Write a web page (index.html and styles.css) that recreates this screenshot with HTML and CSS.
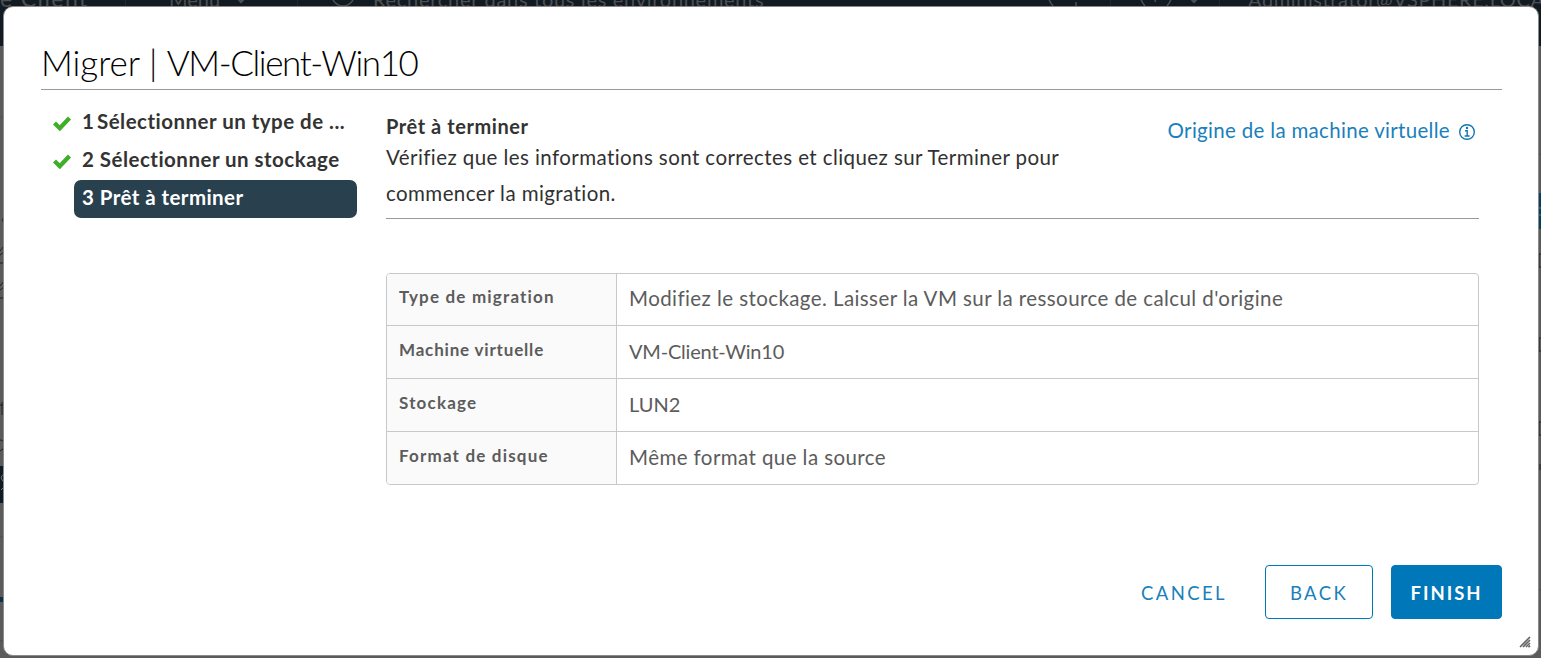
FILE: index.html
```html
<!DOCTYPE html>
<html lang="fr">
<head>
<meta charset="utf-8">
<title>Migrer | VM-Client-Win10</title>
<link rel="stylesheet" href="styles.css">
</head>
<body>
<div class="app">
  <header class="topbar">
    <div class="brand">e Client</div>
    <div class="menu"><span class="menu-label">Menu</span>
      <svg class="chevron" viewBox="0 0 16 10"><path d="M2 2l6 6 6-6"/></svg>
    </div>
    <div class="search">
      <svg class="ring" viewBox="0 0 24 24"><circle cx="12" cy="12" r="11"/></svg>
      <span class="search-label">Rechercher dans tous les environnements</span>
    </div>
    <div class="refresh"><svg class="ring wide" viewBox="0 0 34 24"><path d="M5 1c-5 7-5 15 1 22M29 19v4"/></svg></div>
    <div class="help">
      <svg class="ring wide" viewBox="0 0 34 24"><path d="M5 1c-5 7-5 15 1 22M29 1c5 7 5 15-1 22M18 8l-2 11"/></svg>
      <svg class="chevron" viewBox="0 0 16 10"><path d="M2 2l6 6 6-6"/></svg>
    </div>
    <div class="user">Administrator@VSPHERE.LOCAL</div>
  </header>
  <div class="workspace">
    <svg class="edge" viewBox="0 0 4 612">
      <path class="faint" d="M0 71h4M0 491h4M0 595h4"/>
      <path class="mark" d="M4 170q-3 4 0 8M0 205l4-5M0 209l4-3M0 217h4M0 240l4-5M0 244l4-3M0 252h4M0 359h4M2 356v13M0 394q4 0 4 5t-4 6"/>
      <rect class="dark" y="420" width="4" height="37"/>
      <path class="pale" d="M4 428q-5 3-1 7t-2 9"/>
      <rect class="teal" y="551" width="4" height="5"/>
    </svg>
    <svg class="edge" viewBox="0 0 4 612">
      <path class="faint" d="M0 108h4M0 544h4"/>
      <rect class="blue" y="147" width="4" height="36"/>
      <path class="pale" d="M4 162h-3v7h3"/>
      <path class="mark" d="M4 208H2v13h2M4 292H2v13h2M4 376H2v13h2M3 418v6"/>
    </svg>
  </div>
</div>

<section class="dialog" role="dialog">
  <h1 class="dialog-title">Migrer | <span class="vm-name">VM-Client-Win10</span></h1>
  <div class="dialog-body">
    <ol class="steps">
      <li class="step"><svg class="check" viewBox="0 0 20 16"><path d="M2.5 8l5.3 5.2L17.5 3"/></svg><span class="step-label"><span class="narrow">1</span> Sélectionner un type de ...</span></li>
      <li class="step"><svg class="check" viewBox="0 0 20 16"><path d="M2.5 8l5.3 5.2L17.5 3"/></svg><span class="step-label">2 Sélectionner un stockage</span></li>
      <li class="step"><span class="step-label active">3 Prêt à terminer</span></li>
    </ol>
    <main class="content">
      <div class="page-head">
        <div class="intro">
          <h2 class="page-title">Prêt à terminer</h2>
          <p class="page-text">Vérifiez que les informations sont correctes et cliquez sur Terminer pour<br>commencer la migration.</p>
        </div>
        <a class="origin"><span class="origin-label">Origine de la machine virtuelle</span>
          <svg class="info" viewBox="0 0 18 18"><circle cx="9" cy="9" r="7.3"/><path d="M7 7.8h2.2v5M6.6 13h5"/><circle class="dot" cx="9" cy="5" r="1.2"/></svg>
        </a>
      </div>
      <dl class="summary">
        <dt>Type de migration</dt><dd>Modifiez le stockage. Laisser la VM sur la ressource de calcul d'origine</dd>
        <dt class="snug">Machine virtuelle</dt><dd class="tight">VM-Client-Win10</dd>
        <dt>Stockage</dt><dd class="plain">LUN2</dd>
        <dt>Format de disque</dt><dd>Même format que la source</dd>
      </dl>
    </main>
  </div>
  <footer class="actions">
    <button class="btn link">CANCEL</button>
    <button class="btn outline">BACK</button>
    <button class="btn primary">FINISH</button>
  </footer>
  <svg class="grip" viewBox="0 0 12 12"><path d="M1 11L11 1M4 11l7-7M7 11l4-4M9.5 11.2l1.6-1.6"/></svg>
</section>
</body>
</html>
```
FILE: styles.css
```css
* { box-sizing: border-box; }
body {
  margin: 0;
  height: 658px;
  overflow: hidden;
  font-family: Lato, "Open Sans", sans-serif;
  font-size: 20px;
  color: #313131;
  background: #5b5b5b;
}
h1, h2, p, ol, dl, dd, dt { margin: 0; padding: 0; font-weight: 400; }
svg { display: block; fill: none; flex: none; }

.app { height: 658px; overflow: hidden; }
.topbar {
  display: grid;
  grid-template-columns: 126px 172px 740px 73px 109px 1fr;
  height: 94px;
  margin-top: -48px;
  background: #131b22;
  color: #4c5052;
  white-space: nowrap;
}
.topbar > div {
  display: flex;
  align-items: center;
  height: 94px;
  min-width: 0;
  border-right: 1px solid #20272d;
}
.topbar > .search, .topbar > .user { border-right: 0; }
.topbar > .refresh { padding-left: 9px; }
.brand { font-size: 23px; letter-spacing: 1.4px; padding-bottom: 2px; }
.menu { padding-left: 43px; gap: 13px; }
.search { padding-left: 33px; gap: 18px; }
.search-label { letter-spacing: .7px; }
.help { padding-left: 28px; gap: 13px; }
.user { padding-left: 28px; overflow: hidden; letter-spacing: .6px; }
.chevron { width: 16px; height: 10px; stroke: #4c5052; stroke-width: 2; }
.ring { width: 24px; height: 24px; stroke: #4c5052; stroke-width: 1.5; margin-top: -8px; }
.ring.wide { width: 34px; }

.workspace { display: flex; justify-content: space-between; height: 612px; background: #5b5b5b; }
.edge { width: 4px; height: 612px; }
.faint { stroke: #4e4e4e; }
.mark { stroke: #202020; }
.pale { stroke: #69757c; }
.dark { fill: #101a22; }
.teal { fill: #0b3346; }
.blue { fill: #083e5f; }

.dialog {
  position: absolute;
  left: 3px;
  top: 6px;
  width: 1536px;
  height: 650px;
  padding: 24px 36px 36px 37px;
  display: flex;
  flex-direction: column;
  background: #fff;
  border: 1px solid #8a8a8a;
  border-radius: 10px;
}
.dialog-title {
  height: 59px;
  border-bottom: 1px solid #999;
  font-size: 35px;
  font-weight: 300;
  line-height: 62px;
  color: #000;
}
.vm-name { letter-spacing: -1.4px; }
.dialog-body { display: flex; flex: 1; }

.steps { list-style: none; width: 345px; padding-top: 14px; }
.step { display: flex; height: 38px; padding-left: 11px; }
.step:last-child { padding-left: 33px; }
.check { width: 20px; height: 16px; margin: 11px 10px 0 0; stroke: #3fae29; stroke-width: 4.3; }
.step-label {
  font-size: 20.5px;
  line-height: 35px;
  font-weight: 700;
  letter-spacing: .48px;
  color: #333;
  white-space: nowrap;
}
.narrow { letter-spacing: -2.4px; }
.step-label.active {
  width: 283px;
  height: 38px;
  padding-left: 8px;
  line-height: 34px;
  letter-spacing: .43px;
  border-radius: 7px;
  background: #29404e;
  color: #fff;
}

.content { width: 1093px; }
.page-head {
  display: flex;
  justify-content: space-between;
  height: 129px;
  border-bottom: 1px solid #999;
  white-space: nowrap;
}
.page-title { margin-top: 21px; font-size: 20px; font-weight: 700; line-height: 30px; letter-spacing: .57px; color: #333; }
.page-text { font-size: 20.5px; line-height: 36px; margin-top: -2px; letter-spacing: .42px; }
.origin { display: flex; gap: 8px; height: 30px; margin: 25px 3px 0 0; line-height: 30px; color: #1a7fba; }
.origin-label { font-size: 20.5px; letter-spacing: .31px; }
.info { width: 18px; height: 18px; margin-top: 8px; stroke: #1377b0; stroke-width: 1.4; }
.dot { fill: #1377b0; stroke: none; }

.summary {
  display: grid;
  grid-template-columns: 230px 1fr;
  grid-template-rows: 52px 53px 53px 52px;
  height: 212px;
  margin-top: 54px;
  border: 1px solid #c8c8c8;
  border-radius: 4px;
  overflow: hidden;
  color: #5c5c5c;
}
.summary dt {
  padding-left: 12px;
  background: #fafafa;
  border-right: 1px solid #c8c8c8;
  border-bottom: 1px solid #c8c8c8;
  font-size: 17px;
  font-weight: 700;
  line-height: 48px;
  letter-spacing: 1.18px;
}
.summary dt:first-of-type { line-height: 46px; }
.summary dt.snug { letter-spacing: .82px; }
.summary dd { padding-left: 12px; font-size: 20.5px; line-height: 51px; letter-spacing: .42px; border-bottom: 1px solid #c8c8c8; }
.summary dd:first-of-type { line-height: 49px; }
.summary dd.tight { font-size: 20px; letter-spacing: -.2px; }
.summary dd.plain { font-size: 20px; letter-spacing: 0; }
.summary dt:last-of-type, .summary dd:last-child { border-bottom: 0; }

.actions { display: flex; justify-content: flex-end; gap: 18px; }
.btn {
  height: 54px;
  padding: 1px 0 0;
  border: 1px solid #0077b8;
  border-radius: 4px;
  background: #fff;
  color: #1a7fba;
  font: 400 18.5px/52px Lato, sans-serif;
  letter-spacing: 2.4px;
}
.btn.link { width: 126px; border-color: transparent; }
.btn.outline { width: 108px; }
.btn.primary { width: 111px; background: #0077b8; color: #fff; font-weight: 700; letter-spacing: 2px; }
.grip { position: absolute; right: 7px; bottom: 7px; width: 12px; height: 12px; stroke: #666; stroke-width: 1.6; }
```
